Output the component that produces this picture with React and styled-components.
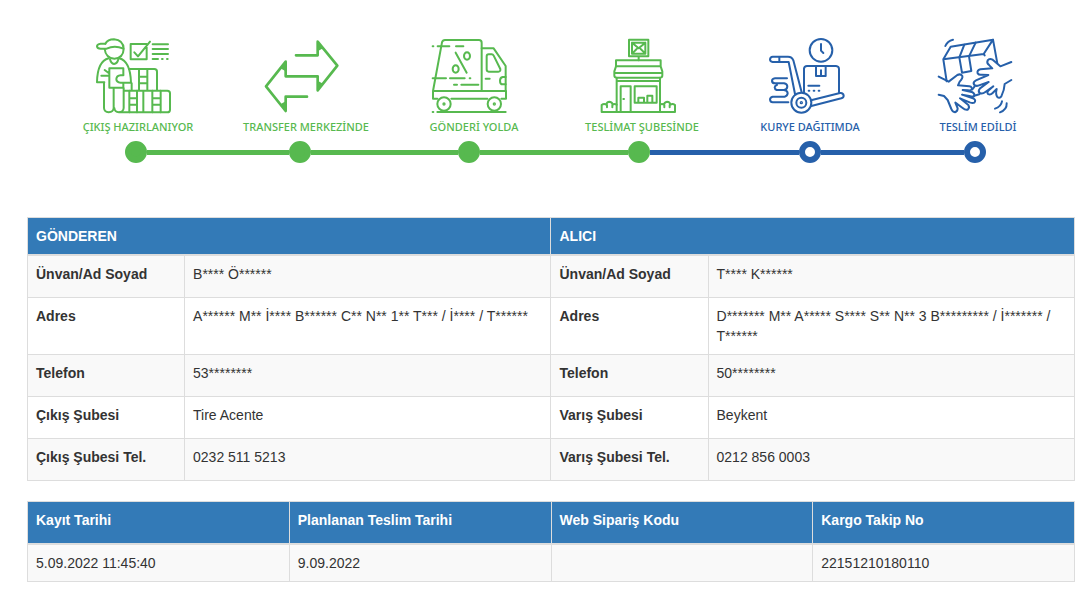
import React from "react";
import styled, { createGlobalStyle } from "styled-components";

const colors = {
  green: "#57b94f",
  blue: "#2660aa",
  header: "#337ab7",
  border: "#dddddd",
  stripe: "#f9f9f9",
  text: "#333333",
};

const steps = [
  { label: "ÇIKIŞ HAZIRLANIYOR", icon: PreparingIcon, done: true, next: 142 },
  { label: "TRANSFER MERKEZİNDE", icon: TransferIcon, done: true, next: 147 },
  { label: "GÖNDERİ YOLDA", icon: TruckIcon, done: true, next: 148 },
  { label: "TESLİMAT ŞUBESİNDE", icon: BranchIcon, done: true, next: 149 },
  { label: "KURYE DAĞITIMDA", icon: CourierIcon, done: false, next: 143 },
  { label: "TESLİM EDİLDİ", icon: DeliveredIcon, done: false },
];

const parties = [
  ["Ünvan/Ad Soyad", "B**** Ö******", "Ünvan/Ad Soyad", "T**** K******"],
  [
    "Adres",
    "A****** M** İ**** B****** C** N** 1** T*** / İ**** / T******",
    "Adres",
    "D******* M** A***** S**** S** N** 3 B********* / İ******* / T******",
  ],
  ["Telefon", "53********", "Telefon", "50********"],
  ["Çıkış Şubesi", "Tire Acente", "Varış Şubesi", "Beykent"],
  ["Çıkış Şubesi Tel.", "0232 511 5213", "Varış Şubesi Tel.", "0212 856 0003"],
];

const shipment = [
  ["Kayıt Tarihi", "5.09.2022 11:45:40"],
  ["Planlanan Teslim Tarihi", "9.09.2022"],
  ["Web Sipariş Kodu", ""],
  ["Kargo Takip No", "22151210180110"],
];

function PreparingIcon() {
  return (
    <Icon viewBox="66 12 252 252">
      <path d="M106 41H92Q81 42 81 49Q82 56 92 56H110Q134 44 160 56" />
      <path d="M106 41Q113 28 132 28Q160 30 161 57Q160 84 133 86Q107 84 104 57" />
      <path d="M116 85Q82 94 81 157H103M148 85Q181 94 183 158H152Q139 157 139 147Q140 137 152 136H160" />
      <path d="M120 88Q123 101 132 102Q142 101 145 88" />
      <path d="M160 134V115H118V173H160V160M94 137H116M104 120L116 129" />
      <path d="M102 158V234Q103 246 116 247Q130 246 131 234V175M133 234Q134 246 147 247Q160 246 161 234V175" />
      <path d="M182 42H230V88H182ZM193 67L204 79L240 35" />
      <path d="M248 43H294M248 57H294M248 72H294M248 87H264M276 87H278M291 87H293" />
      <path d="M177 117H253Q261 117 261 125V180M185 160V180M207 117V180M232 117V180M207 140H232M207 160H232" />
      <path d="M162 182H292Q300 182 300 190V239Q300 247 292 247H150M220 182V247" />
      <path d="M178 182V247M201 182V247M178 205H201M178 224H201M247 182V247M272 182V247M247 205H272M247 224H272" />
    </Icon>
  );
}

function TransferIcon() {
  return (
    <Icon viewBox="75 12 252 252" $stroke={8}>
      <path d="M183 76H248V35L307 107L248 181V139H152V95L93 169L152 243V200H216" />
      <path
        fill="currentColor"
        d="M248 35L264 55L248 64ZM248 181L264 161L248 152ZM152 95L136 115L152 124ZM152 243L136 223L152 214Z"
        stroke="none"
      />
    </Icon>
  );
}

function TruckIcon() {
  return (
    <Icon viewBox="84 12 252 252">
      <path d="M99 183L126 37Q128 30 135 30H237Q245 30 245 38V183M99 183H318M99 183V206H112M154 206H262M304 206H318V183" />
      <path d="M245 55H281L317 108V183M266 73H275Q279 73 281 77L301 117Q302 125 295 125H266Q260 125 260 118V79Q260 73 266 73Z" />
      <path d="M317 141H308Q300 143 300 152Q300 163 308 163H317M257 146H269" />
      <circle cx="132" cy="222" r="20" />
      <circle cx="283" cy="222" r="20" />
      <circle cx="132" cy="222" r="2" />
      <circle cx="283" cy="222" r="2" />
      <path d="M112 246H317M98 246H100M98 49H100M113 49H148M168 49H190M98 145H138M150 145H194M209 145H211M162 164H171M184 164H235" />
      <path d="M167 68L200 128" />
      <ellipse cx="201" cy="78" rx="9" ry="11" />
      <ellipse cx="167" cy="117" rx="9" ry="11" />
    </Icon>
  );
}

function BranchIcon() {
  return (
    <Icon viewBox="0 0 252 252">
      <path d="M99 17H157V67H99ZM108 26H148V59H108ZM108 26L128 43L148 26M108 59L122 45M148 59L134 45M128 67V79" />
      <path d="M60 79H194V97H60ZM60 97L55 112V117H199V112L194 97M55 117V124Q55 131 61 131H193Q199 131 199 124V117" />
      <path d="M62 131V234M192 131V234M62 141H192M74 234V157H104V234M82 195H84" />
      <path d="M116 157H182V206H116ZM127 204V191H144V204M154 204V185H169V204" />
      <path d="M62 234H17V213Q24 207 31 212Q32 203 41 203Q49 204 50 212Q56 208 62 212M33 213V220M49 213V220M104 234H237V213Q230 207 223 212Q222 203 213 203Q205 204 204 212Q198 208 192 212M221 213V220M205 213V220M62 234H104" />
    </Icon>
  );
}

function CourierIcon() {
  return (
    <Icon viewBox="72 12 252 252">
      <circle cx="243" cy="61" r="34" />
      <path d="M243 42V62L250 69" />
      <path d="M165 192L146 96H98Q90 95 90 88Q91 80 98 80H144Q156 80 160 91L185 187M118 80V96" />
      <circle cx="184" cy="218" r="30" />
      <circle cx="184" cy="218" r="15" />
      <circle cx="184" cy="218" r="2" />
      <path d="M192 188V116Q193 108 201 108H288Q297 109 297 117V189M228 108V138H257V108M243 121V136" />
      <path d="M213 211L300 189Q310 188 311 197Q311 203 304 205L214 228" />
      <path d="M205 167H238M206 182H208M221 182H223M236 182H238" />
      <path d="M141 145H105Q96 146 96 153Q97 160 105 160H132Q142 162 142 170Q141 179 132 180H110Q104 178 104 172Q105 166 111 165M132 180Q143 182 143 190Q142 198 134 200H98Q90 202 90 209Q91 217 98 217H145" />
    </Icon>
  );
}

function DeliveredIcon() {
  return (
    <Icon viewBox="0 0 252 252">
      <path d="M44 142L34 76L56 38L183 17L196 88M34 76L155 60L183 17M155 60L158 64" />
      <path d="M97 32L82 70L90 116L118 111L111 67L131 26" />
      <path d="M40 36Q46 21 63 17M189 224Q207 218 210 202M204 235Q225 227 224 208" />
      <path d="M20 128L50 143L76 123Q86 118 91 126Q93 133 83 143L78 154L112 157Q122 159 119 167Q116 170 108 169L92 168L122 175Q130 180 126 187Q122 189 112 186L90 182L125 194Q133 199 127 206Q122 208 113 205L84 193L109 213Q114 221 107 227Q100 229 92 222L70 206L77 223Q77 233 69 235Q61 234 58 225L47 198L36 186L20 182" />
      <path d="M238 84L205 97L182 77Q172 72 167 79Q163 87 172 94L181 103L145 106Q134 109 137 118Q141 124 150 122L169 123L132 139Q122 144 126 152Q131 158 141 154L170 144L144 163Q137 171 143 177Q151 181 160 174L184 157L172 167Q163 174 168 180Q175 184 182 177L194 165Q190 181 196 189Q202 195 208 187Q217 169 218 150L238 138" />
      <path d="M121 166L128 157M127 185L142 181" />
    </Icon>
  );
}

function Tracker() {
  return (
    <TrackerWrapper>
      <Steps>
        {steps.map(({ label, icon: StepIcon, done }) => (
          <Step key={label} $done={done}>
            <StepIcon />
            <StepLabel>{label}</StepLabel>
          </Step>
        ))}
      </Steps>
      <Track aria-hidden="true">
        {steps.map(({ label, done, next }, i) => (
          <React.Fragment key={label}>
            <Dot $done={done} />
            {next && <Line $grow={next} $done={done && i < 3} />}
          </React.Fragment>
        ))}
      </Track>
    </TrackerWrapper>
  );
}

function App() {
  return (
    <>
      <GlobalStyle />
      <Page>
        <Tracker />
        <Table>
          <colgroup>
            <Col $width={15} />
            <Col $width={35} />
            <Col $width={15} />
            <Col $width={35} />
          </colgroup>
          <thead>
            <tr>
              <HeadCell colSpan={2}>GÖNDEREN</HeadCell>
              <HeadCell colSpan={2}>ALICI</HeadCell>
            </tr>
          </thead>
          <tbody>
            {parties.map(([fromKey, from, toKey, to]) => (
              <Row key={fromKey}>
                <KeyCell scope="row">{fromKey}</KeyCell>
                <Cell>{from}</Cell>
                <KeyCell scope="row">{toKey}</KeyCell>
                <Cell>{to}</Cell>
              </Row>
            ))}
          </tbody>
        </Table>
        <Table>
          <thead>
            <tr>
              {shipment.map(([title]) => (
                <HeadCell key={title} $tall>
                  {title}
                </HeadCell>
              ))}
            </tr>
          </thead>
          <tbody>
            <Row>
              {shipment.map(([title, value]) => (
                <Cell key={title}>{value}</Cell>
              ))}
            </Row>
          </tbody>
        </Table>
      </Page>
    </>
  );
}

const GlobalStyle = createGlobalStyle`
  * {
    box-sizing: border-box;
  }
  body {
    margin: 0;
    background: #ffffff;
    color: ${colors.text};
    font-family: "Liberation Sans", Arial, sans-serif;
    font-size: 14px;
    line-height: 20px;
  }
`;

const Page = styled.main`
  padding: 34px 17px 0 27px;
`;

const TrackerWrapper = styled.section`
  padding: 0 17px 0 23px;
  margin-bottom: 54px;
`;

const Steps = styled.ol`
  display: grid;
  grid-template-columns: repeat(6, 1fr);
  margin: 0;
  padding: 0;
  list-style: none;
`;

const Step = styled.li`
  display: flex;
  flex-direction: column;
  align-items: center;
  color: ${({ $done }) => ($done ? colors.green : colors.blue)};
`;

const StepLabel = styled.span`
  padding-left: 8px;
  font-family: "Noto Sans", Verdana, sans-serif;
  font-size: 11px;
  font-weight: 500;
  line-height: 18px;
  white-space: nowrap;
`;

const Icon = styled.svg`
  width: 84px;
  height: 84px;
  fill: none;
  stroke: currentColor;
  stroke-width: ${({ $stroke }) => $stroke || 6};
  stroke-linecap: round;
  stroke-linejoin: round;
`;

const Track = styled.div`
  display: flex;
  align-items: center;
  margin-top: 5px;
  padding: 0 72px 0 75px;
`;

const Dot = styled.span`
  flex: none;
  width: 22px;
  height: 22px;
  border: 6px solid ${({ $done }) => ($done ? colors.green : colors.blue)};
  border-radius: 50%;
  background: ${({ $done }) => ($done ? colors.green : "#ffffff")};
`;

const Line = styled.span`
  flex: ${({ $grow }) => $grow} 1 0;
  height: 5px;
  background: ${({ $done }) => ($done ? colors.green : colors.blue)};
`;

const Table = styled.table`
  width: 100%;
  margin-bottom: 20px;
  table-layout: fixed;
  border-collapse: collapse;
  border: 1px solid ${colors.border};
`;

const Col = styled.col`
  width: ${({ $width }) => $width}%;
`;

const HeadCell = styled.th`
  padding: ${({ $tall }) => ($tall ? "8px 8px 13px" : "8px")};
  border: 1px solid ${colors.border};
  border-bottom-width: 2px;
  background: ${colors.header};
  color: #ffffff;
  text-align: left;
`;

const Row = styled.tr`
  &:nth-child(odd) {
    background: ${colors.stripe};
  }
`;

const Cell = styled.td`
  padding: 8px;
  border: 1px solid ${colors.border};
  vertical-align: top;
`;

const KeyCell = styled.th`
  padding: 8px 8px 13px;
  border: 1px solid ${colors.border};
  text-align: left;
  vertical-align: top;
`;

export default App;
